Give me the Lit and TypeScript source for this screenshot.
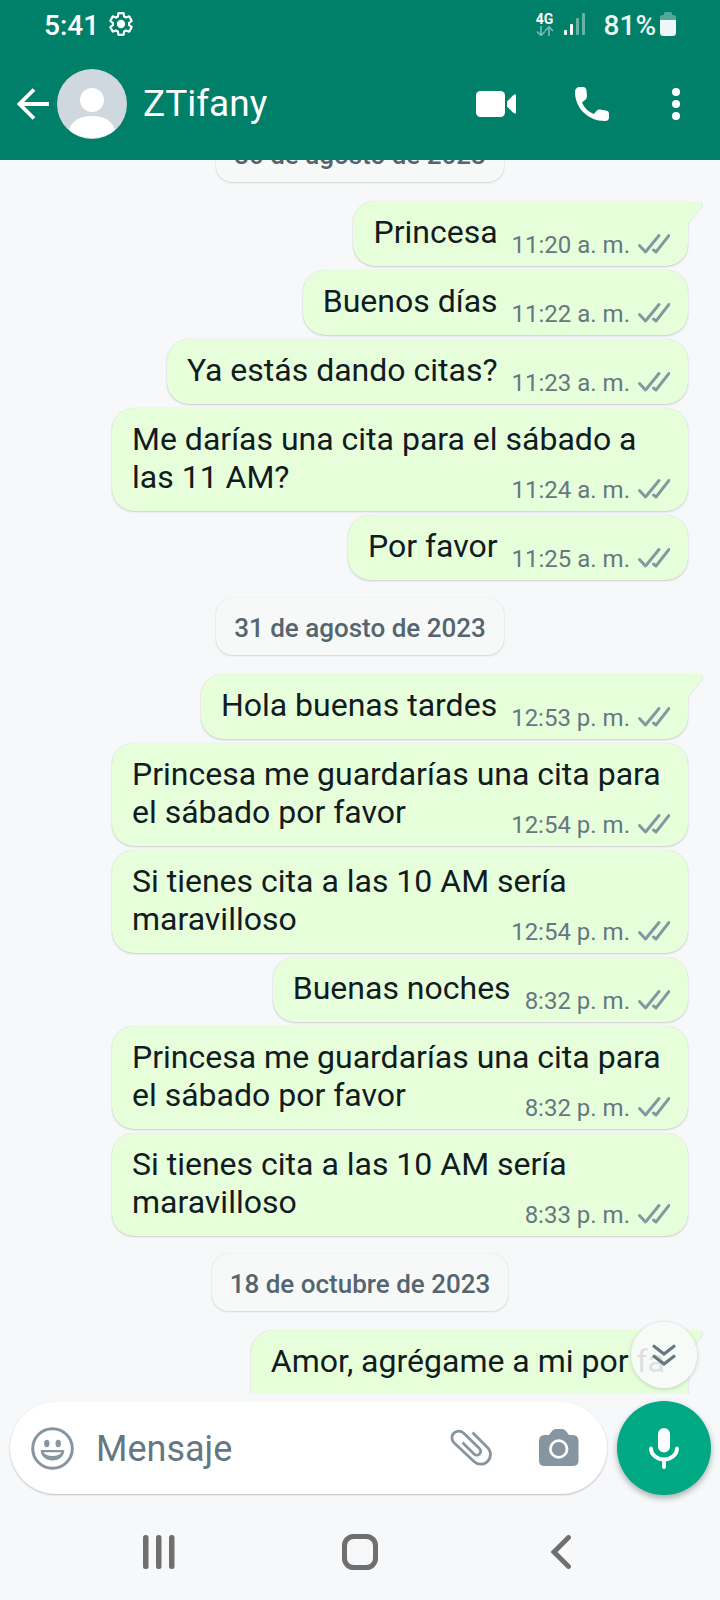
import { LitElement, html, svg, css, nothing } from "lit";
import { customElement, property, query } from "lit/decorators.js";

type Entry =
  | { kind: "date"; label: string }
  | { kind: "msg"; text: string; time?: string; first?: boolean };

const entries: Entry[] = [
  { kind: "date", label: "30 de agosto de 2023" },
  { kind: "msg", text: "Princesa", time: "11:20 a. m.", first: true },
  { kind: "msg", text: "Buenos días", time: "11:22 a. m." },
  { kind: "msg", text: "Ya estás dando citas?", time: "11:23 a. m." },
  { kind: "msg", text: "Me darías una cita para el sábado a las 11 AM?", time: "11:24 a. m." },
  { kind: "msg", text: "Por favor", time: "11:25 a. m." },
  { kind: "date", label: "31 de agosto de 2023" },
  { kind: "msg", text: "Hola buenas tardes", time: "12:53 p. m.", first: true },
  { kind: "msg", text: "Princesa me guardarías una cita para el sábado por favor", time: "12:54 p. m." },
  { kind: "msg", text: "Si tienes cita a las 10 AM sería maravilloso", time: "12:54 p. m." },
  { kind: "msg", text: "Buenas noches", time: "8:32 p. m." },
  { kind: "msg", text: "Princesa me guardarías una cita para el sábado por favor", time: "8:32 p. m." },
  { kind: "msg", text: "Si tienes cita a las 10 AM sería maravilloso", time: "8:33 p. m." },
  { kind: "date", label: "18 de octubre de 2023" },
  { kind: "msg", text: "Amor, agrégame a mi por fa", first: true },
];

const icon = (w: number, h: number, body: unknown) =>
  html`<svg width=${w} height=${h} viewBox="0 0 ${w} ${h}" fill="none" aria-hidden="true">${body}</svg>`;

@customElement("status-bar")
class StatusBar extends LitElement {
  static styles = css`
    :host {
      display: flex;
      align-items: center;
      justify-content: space-between;
      height: 48px;
      padding: 0 44px;
      font-size: 28px;
      font-weight: 500;
      line-height: 32px;
    }
    .side { display: flex; align-items: center; gap: 10px; }
    .label { padding-top: 3px; }
    .network {
      display: flex;
      flex-direction: column;
      align-items: center;
      font-size: 14px;
      font-weight: 700;
      line-height: 14px;
    }
    .power { display: flex; align-items: center; gap: 4px; padding-left: 8px; opacity: 0.93; }
    svg { display: block; }
  `;
  render() {
    return html`
      <div class="side">
        <span class="label">5:41</span>
        <svg width="24" height="24" viewBox="1 1 22 22" fill="none" aria-hidden="true">
          <path stroke="#fff" stroke-width="2" d="M19.43 12.98c.04-.32.07-.64.07-.98s-.03-.66-.07-.98l2.11-1.65c.19-.15.24-.42.12-.64l-2-3.46c-.12-.22-.39-.3-.61-.22l-2.49 1c-.52-.4-1.080-.73-1.690-.98l-.38-2.650C14.460 2.180 14.250 2 14 2h-4c-.25 0-.46.18-.49.42l-.38 2.650c-.61.25-1.170.59-1.690.98l-2.490-1c-.23-.09-.49 0-.61.22l-2 3.460c-.13.22-.07.49.12.64l2.110 1.650c-.04.32-.07.65-.07.98s.03.66.07.98l-2.110 1.650c-.19.15-.24.42-.12.64l2 3.460c.12.22.39.3.61.22l2.490-1c.52.4 1.080.73 1.690.98l.38 2.650c.03.24.24.42.49.42h4c.25 0 .46-.18.49-.42l.38-2.650c.61-.25 1.170-.59 1.690-.98l2.490 1c.23.09.49 0 .61-.22l2-3.460c.12-.22.07-.49-.12-.64l-2.110-1.650z" />
          <circle cx="12" cy="12" r="3.800" fill="#fff" />
        </svg>
      </div>
      <div class="side">
        <span class="network">
          4G
          ${icon(18, 10, svg`<path d="M5 0v9M1 5.500l4 4 4-4M13 10V1M9 5l4-4 4 4" stroke="#fff" stroke-opacity=".45" stroke-width="1.700" />`)}
        </span>
        ${icon(22, 24, svg`
          <g fill="#fff"><rect x="0" y="18" width="3" height="5" rx="1" /><rect x="6" y="12" width="3" height="11" rx="1" /></g>
          <g fill="#fff" fill-opacity=".4"><rect x="12" y="6" width="3" height="17" rx="1" /><rect x="18" y="1" width="3" height="22" rx="1" /></g>`)}
        <span class="power">
          <span class="label">81%</span>
          ${icon(16, 24, svg`
            <path d="M0 8V5.500Q0 3 2.500 3H4V1.500Q4 0 5.500 0h5Q12 0 12 1.500V3h1.500Q16 3 16 5.500V8z" fill="#fff" fill-opacity=".35" />
            <path d="M0 8h16v12.500q0 3.500-3.500 3.500h-9Q0 24 0 20.500z" fill="#fff" />`)}
        </span>
      </div>
    `;
  }
}

@customElement("chat-header")
class ChatHeader extends LitElement {
  static styles = css`
    :host { display: flex; align-items: center; height: 112px; padding: 0 8px 0 17px; }
    button {
      display: grid;
      place-items: center;
      border: 0;
      padding: 0;
      background: none;
      color: inherit;
      height: 72px;
    }
    svg { display: block; }
    .back { width: 32px; margin-right: 8px; }
    .name {
      flex: 1;
      min-width: 0;
      margin: 0;
      padding-left: 16px;
      font-size: 37px;
      font-weight: 400;
      line-height: 44px;
    }
    .call { width: 96px; }
    .more { width: 72px; }
  `;
  render() {
    return html`
      <button class="back" aria-label="Atrás">
        ${icon(32, 32, svg`<path d="M17 1.500L2.500 16 17 30.500M3 16h29" stroke="#fff" stroke-width="3.800" />`)}
      </button>
      ${icon(70, 70, svg`
        <defs><clipPath id="round"><circle cx="35" cy="35" r="35" /></clipPath></defs>
        <g clip-path="url(#round)">
          <rect width="70" height="70" fill="#cfd8df" />
          <circle cx="35" cy="31" r="12" fill="#fff" />
          <path d="M12 61C15 51 24 47 35 47s20 4 23 14c-5 5-13 8-23 8s-18-3-23-8z" fill="#fff" />
        </g>`)}
      <h1 class="name">ZTifany</h1>
      <button class="call" aria-label="Videollamada">
        ${icon(40, 26, svg`<rect width="29" height="26" rx="4.500" fill="#fff" /><path d="M31 10.500l6-6q3-2.500 3 .5v16q0 3-3 .5l-6-6z" fill="#fff" />`)}
      </button>
      <button class="call" aria-label="Llamar">
        ${icon(34, 34, svg`<path d="M0 5C0 2 2 0 5 0h3c2 0 3 1 3.400 3l.5 5c.3 2.400-.2 3.600-1.900 5L7 15.500C9.500 21 13 24.500 19 27l2-2.600c1.300-1.500 3-2 5-1.700l5 .8c2 .3 3 1.500 3 3.500v3.500c0 2.500-1.500 3.500-4 3.500C13 34 0 21 0 5z" fill="#fff" />`)}
      </button>
      <button class="more" aria-label="Más opciones">
        ${icon(8, 32, svg`<g fill="#fff"><circle cx="4" cy="4" r="4" /><circle cx="4" cy="16" r="4" /><circle cx="4" cy="28" r="4" /></g>`)}
      </button>
    `;
  }
}

@customElement("message-bubble")
class MessageBubble extends LitElement {
  @property() text = "";
  @property() time?: string;
  @property({ type: Boolean }) first = false;

  static styles = css`
    :host { display: flex; justify-content: flex-end; }
    .bubble {
      position: relative;
      display: flow-root;
      box-sizing: border-box;
      max-width: 576px;
      padding: 12px 18px 7px 20px;
      border-radius: 22px;
      background: #e6ffda;
      color: #111b21;
      font-size: 32px;
      line-height: 38px;
      box-shadow: 0 0 1px #0b141a26, 0 1px 2px #0b141a2b;
    }
    .first { border-top-right-radius: 0; }
    .open { padding: 12px 23px 46px 20px; }
    .tail { position: absolute; top: 0; right: -15px; display: block; }
    .meta {
      float: right;
      display: flex;
      align-items: center;
      gap: 8px;
      margin: 18px 0 0 14px;
      color: #667781;
      font-size: 24px;
      line-height: 28px;
    }
    .meta svg { margin-bottom: 2px; }
  `;
  render() {
    const cls = `bubble ${this.first ? "first" : ""} ${this.time ? "" : "open"}`;
    return html`<div class=${cls}>${this.text}${this.time
      ? html`<span class="meta"><time>${this.time}</time>${icon(32, 20, svg`<path d="M1.500 11.500l6 6.500L21 1.500M15.500 16l2.500 2L31 1.500" stroke="#8696a0" stroke-width="2.900" stroke-linecap="round" stroke-linejoin="round" />`)}</span>`
      : nothing}${this.first
      ? html`<svg class="tail" width="18" height="24" viewBox="0 0 18 24" aria-hidden="true"><path d="M3 .5H14.500Q18.500 1.500 17 6L3 23.500" fill="none" stroke="#0b141a" stroke-opacity=".1" /><path d="M0 0H14.500Q18 1 17 5L3 23H0z" fill="#e6ffda" /></svg>`
      : nothing}</div>`;
  }
}

@customElement("message-composer")
class MessageComposer extends LitElement {
  static styles = css`
    :host { display: flex; align-items: center; gap: 10px; padding: 7px 9px 9px 10px; }
    svg { display: block; }
    button { display: grid; place-items: center; border: 0; padding: 0; background: none; }
    .field {
      flex: 1;
      min-width: 0;
      display: flex;
      align-items: center;
      height: 92px;
      border-radius: 46px;
      background: #fff;
      box-shadow: 0 1px 2px #0b141a40;
    }
    .emoji { width: 84px; height: 80px; }
    .tool { width: 88px; height: 80px; }
    .camera { margin-right: 4px; }
    input {
      flex: 1;
      min-width: 0;
      height: 60px;
      border: 0;
      outline: 0;
      padding: 2px 0 0 2px;
      background: none;
      color: #111b21;
      font: 400 36px/44px Roboto, sans-serif;
    }
    input::placeholder { color: #667781; opacity: 1; }
    .mic {
      width: 94px;
      height: 94px;
      border-radius: 50%;
      background: #00a884;
      box-shadow: 0 3px 6px #0b141a55;
    }
  `;
  render() {
    return html`
      <div class="field">
        <button class="emoji" aria-label="Emojis">
          ${icon(43, 43, svg`
            <circle cx="21.500" cy="21.500" r="19.800" stroke="#8696a0" stroke-width="3" />
            <g fill="#8696a0"><ellipse cx="15.800" cy="16.500" rx="2.700" ry="3.700" /><ellipse cx="27.200" cy="16.500" rx="2.700" ry="3.700" />
            <path d="M9.700 23h23.600c0 6-5 10.500-11.800 10.500S9.700 29 9.700 23z" /></g>
            <path d="M12.500 25.300h18c-1.500 2.500-4.500 3.700-9 3.700s-7.500-1.200-9-3.700z" fill="#fff" />`)}
        </button>
        <input type="text" aria-label="Mensaje" placeholder="Mensaje" />
        <button class="tool" aria-label="Adjuntar">
          ${icon(42, 38, svg`<path d="M22.500 3.500L37.500 18.500A9.600 9.600 0 0 1 24 32.500L4 13.700A6.700 6.700 0 0 1 13.500 4L29.500 19.500A3.800 3.800 0 0 1 24 25L12.500 13.500" stroke="#8696a0" stroke-width="2.800" />`)}
        </button>
        <button class="tool camera" aria-label="Cámara">
          ${icon(40, 38, svg`
            <path d="M5.500 6H10l2.500-3.200C13.800 1 15 0 17 0h6c2 0 3.200 1 4.500 2.800L30 6h3.500Q39.500 6 39.500 12v19.500Q39.500 37 33.500 37h-28Q0 37 0 31.500V12Q0 6 5.500 6z" fill="#8696a0" />
            <circle cx="19.700" cy="20" r="8.300" stroke="#fff" stroke-width="2.800" />`)}
        </button>
      </div>
      <button class="mic" aria-label="Mensaje de voz">
        ${icon(30, 41, svg`<rect x="9" width="12" height="24.500" rx="6" fill="#fff" /><path d="M2 20.500a13 11 0 0 0 26 0M15 32v7" stroke="#fff" stroke-width="3.800" stroke-linecap="round" />`)}
      </button>
    `;
  }
}

@customElement("system-nav")
class SystemNav extends LitElement {
  static styles = css`
    :host { display: grid; grid-template-columns: repeat(3, 1fr); height: 96px; padding: 0 58px; }
    button { display: grid; place-items: center; border: 0; padding: 0; background: none; }
    svg { display: block; }
  `;
  render() {
    return html`
      <button aria-label="Recientes">
        ${icon(32, 34, svg`<g fill="#6f6f6f"><rect width="5.500" height="34" rx="2.500" /><rect x="13" width="5.500" height="34" rx="2.500" /><rect x="26" width="5.500" height="34" rx="2.500" /></g>`)}
      </button>
      <button aria-label="Inicio">
        ${icon(36, 36, svg`<rect x="2.500" y="2.500" width="31" height="31" rx="9" stroke="#6f6f6f" stroke-width="5" />`)}
      </button>
      <button aria-label="Volver">
        ${icon(20, 34, svg`<path d="M17.500 2.500L3 17l14.500 14.500" stroke="#6f6f6f" stroke-width="4.800" stroke-linecap="round" />`)}
      </button>
    `;
  }
}

@customElement("app-root")
class AppRoot extends LitElement {
  @query(".log") log!: HTMLElement;

  static styles = css`
    :host {
      display: flex;
      flex-direction: column;
      height: 100vh;
      background: #f7f8fa;
      font-family: Roboto, sans-serif;
    }
    .top { background: #008069; color: #fff; }
    .chat { position: relative; flex: 1; min-height: 0; display: flex; }
    .log {
      flex: 1;
      display: flex;
      flex-direction: column;
      gap: 4px;
      padding: 0 32px;
      overflow-y: auto;
      scrollbar-width: none;
    }
    .log > * { flex: none; }
    .date {
      align-self: center;
      margin: 14px 0 15px;
      padding: 15px 18px 12px;
      border-radius: 16px;
      background: #f7f9f8;
      color: #54656f;
      font-size: 26px;
      font-weight: 500;
      line-height: 30px;
      box-shadow: 0 0 1px #0b141a26, 0 1px 2px #0b141a20;
    }
    .jump {
      position: absolute;
      right: 23px;
      bottom: 6px;
      display: grid;
      place-items: center;
      width: 66px;
      height: 66px;
      border: 0;
      border-radius: 50%;
      padding: 0;
      background: #f9fafae0;
      box-shadow: 0 1px 4px #0b141a33;
    }
  `;

  async firstUpdated() {
    await Promise.all([...this.renderRoot.querySelectorAll("message-bubble")].map((b) => (b as LitElement).updateComplete));
    this.log.scrollTop = 49;
  }

  render() {
    return html`
      <header class="top">
        <status-bar></status-bar>
        <chat-header></chat-header>
      </header>
      <main class="chat">
        <div class="log">
          ${entries.map((e) =>
            e.kind === "date"
              ? html`<div class="date">${e.label}</div>`
              : html`<message-bubble .text=${e.text} .time=${e.time} ?first=${e.first}></message-bubble>`
          )}
        </div>
        <button class="jump" aria-label="Ir al final">
          ${icon(26, 24, svg`<path d="M2 2.500l11 8.500 11-8.500M2 12.500L13 21l11-8.500" stroke="#667781" stroke-width="3" />`)}
        </button>
      </main>
      <message-composer></message-composer>
      <system-nav></system-nav>
    `;
  }
}
